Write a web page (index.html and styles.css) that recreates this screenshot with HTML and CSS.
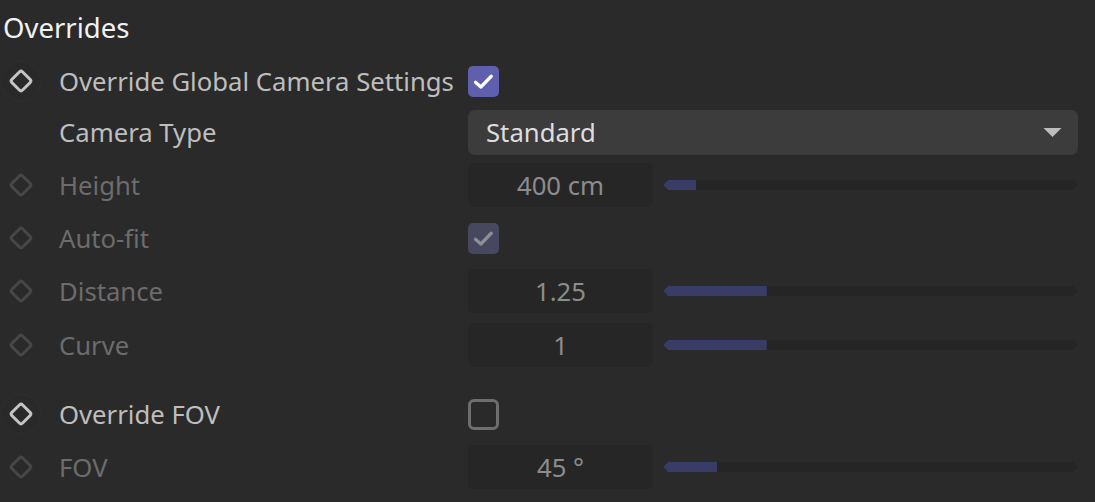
FILE: index.html
```html
<!DOCTYPE html>
<html>
<head>
<meta charset="utf-8">
<link rel="stylesheet" href="styles.css">
</head>
<body>
<div class="panel">
  <div class="title">Overrides</div>

  <div class="row r-50">
    <div class="key"><span class="ring"></span><svg class="dia on" viewBox="0 0 24 24"><rect x="5.5" y="5.5" width="13" height="13" rx="2" transform="rotate(45 12 12)"/></svg></div>
    <div class="label on">Override Global Camera Settings</div>
    <div class="ctrl"><span class="cb checked"><svg viewBox="0 0 20 20"><path d="M3.6 10.6 L7.9 14.4 L16.2 5.8"/></svg></span></div>
  </div>

  <div class="row r-52">
    <div class="key"></div>
    <div class="label on">Camera Type</div>
    <div class="ctrl"><div class="dropdown"><span>Standard</span><svg class="caret" viewBox="0 0 20 10"><path d="M0 0 H20 L10 10 Z"/></svg></div></div>
  </div>

  <div class="row r-54">
    <div class="key"><svg class="dia off" viewBox="0 0 24 24"><rect x="5.5" y="5.5" width="13" height="13" rx="2" transform="rotate(45 12 12)"/></svg></div>
    <div class="label off">Height</div>
    <div class="ctrl"><div class="field">400 cm</div><div class="slider"><div class="fill" style="width:8%"></div></div></div>
  </div>

  <div class="row r-52">
    <div class="key"><svg class="dia off" viewBox="0 0 24 24"><rect x="5.5" y="5.5" width="13" height="13" rx="2" transform="rotate(45 12 12)"/></svg></div>
    <div class="label off">Auto-fit</div>
    <div class="ctrl"><span class="cb dis"><svg viewBox="0 0 20 20"><path d="M3.6 10.6 L7.9 14.4 L16.2 5.8"/></svg></span></div>
  </div>

  <div class="row r-54">
    <div class="key"><svg class="dia off" viewBox="0 0 24 24"><rect x="5.5" y="5.5" width="13" height="13" rx="2" transform="rotate(45 12 12)"/></svg></div>
    <div class="label off">Distance</div>
    <div class="ctrl"><div class="field">1.25</div><div class="slider"><div class="fill" style="width:25%"></div></div></div>
  </div>

  <div class="row r-54">
    <div class="key"><svg class="dia off" viewBox="0 0 24 24"><rect x="5.5" y="5.5" width="13" height="13" rx="2" transform="rotate(45 12 12)"/></svg></div>
    <div class="label off">Curve</div>
    <div class="ctrl"><div class="field">1</div><div class="slider"><div class="fill" style="width:25%"></div></div></div>
  </div>

  <div class="spacer"></div>

  <div class="row r-52">
    <div class="key"><span class="ring"></span><svg class="dia on" viewBox="0 0 24 24"><rect x="5.5" y="5.5" width="13" height="13" rx="2" transform="rotate(45 12 12)"/></svg></div>
    <div class="label on">Override FOV</div>
    <div class="ctrl"><span class="cb empty"></span></div>
  </div>

  <div class="row r-54">
    <div class="key"><svg class="dia off" viewBox="0 0 24 24"><rect x="5.5" y="5.5" width="13" height="13" rx="2" transform="rotate(45 12 12)"/></svg></div>
    <div class="label off">FOV</div>
    <div class="ctrl"><div class="field">45 °</div><div class="slider"><div class="fill" style="width:13%"></div></div></div>
  </div>
</div>
</body>
</html>
```

FILE: styles.css
```css
html, body {
  margin: 0;
  padding: 0;
  background: #2a2a2a;
  width: 1095px;
  height: 502px;
  overflow: hidden;
}
.panel {
  font-family: "Noto Sans", "Open Sans", sans-serif;
  font-size: 25.7px;
  display: flex;
  flex-direction: column;
}
.title {
  height: 56px;
  display: flex;
  align-items: center;
  padding-left: 3px;
  color: #f2f2f2;
  font-size: 27.5px;
  padding-bottom: 2px;
  box-sizing: border-box;
}
.row {
  display: flex;
  align-items: center;
}
.r-50 { height: 50px; }
.r-52 { height: 52px; }
.r-54 { height: 54px; }
.spacer { height: 16px; }
.key {
  width: 42px;
  height: 42px;
  position: relative;
  display: flex;
  align-items: center;
  justify-content: center;
  flex: none;
}
.ring {
  position: absolute;
  left: 1px;
  top: 1px;
  width: 38px;
  height: 38px;
  border-radius: 50%;
  border: 1px solid #2f2f2f;
  background: #292929;
}
.dia {
  position: relative;
  width: 28px;
  height: 28px;
  margin-right: 1px;
}
.dia rect {
  fill: none;
  stroke-width: 2.5;
}
.dia.on rect { stroke: #c4c4c4; }
.dia.off rect { stroke: #474747; }
.label {
  width: 426px;
  padding-left: 17px;
  box-sizing: border-box;
  flex: none;
  white-space: nowrap;
}
.label.on { color: #bebebe; }
.label.off { color: #6c6c6c; }
.ctrl {
  width: 610px;
  display: flex;
  align-items: center;
}
.cb {
  width: 31px;
  height: 31px;
  border-radius: 5px;
  box-sizing: border-box;
  display: flex;
  align-items: center;
  justify-content: center;
}
.cb svg {
  width: 25px;
  height: 25px;
}
.cb path {
  fill: none;
  stroke-width: 2.6;
  stroke-linecap: round;
  stroke-linejoin: round;
}
.cb.checked { background: #5f5fae; }
.cb.checked path { stroke: #ffffff; }
.cb.dis { background: #47475f; }
.cb.dis path { stroke: #8e8e96; }
.cb.empty {
  border: 3px solid #6e6e6e;
  border-radius: 6px;
}
.dropdown {
  width: 610px;
  height: 45px;
  background: #3c3c3c;
  border-radius: 7px;
  display: flex;
  align-items: center;
  justify-content: space-between;
  padding: 0 16px 0 18px;
  box-sizing: border-box;
  color: #dedede;
}
.caret {
  width: 19px;
  height: 9px;
  fill: #bdbdbd;
}
.field {
  width: 185px;
  height: 44px;
  background: #262626;
  border-radius: 6px;
  color: #8c8c8c;
  display: flex;
  align-items: center;
  justify-content: center;
  flex: none;
}
.slider {
  margin-left: 10px;
  width: 415px;
  height: 10px;
  background: #252525;
  clip-path: polygon(0 50%, 5px 0, calc(100% - 5px) 0, 100% 50%, calc(100% - 5px) 100%, 5px 100%);
  position: relative;
}
.fill {
  height: 100%;
  background: #3a3c68;
  clip-path: polygon(0 50%, 5px 0, 100% 0, 100% 100%, 5px 100%);
}
```
